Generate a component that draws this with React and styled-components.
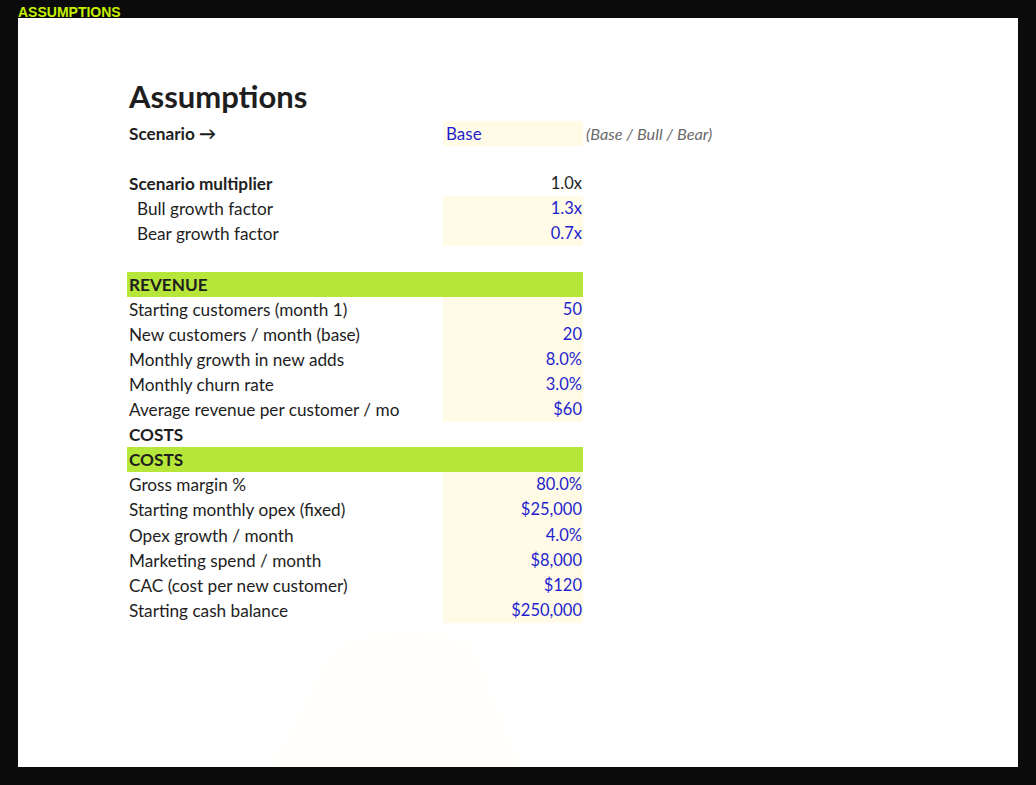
import React from 'react';
import styled, { createGlobalStyle } from 'styled-components';

const GlobalStyle = createGlobalStyle`
  html, body {
    margin: 0;
    padding: 0;
    background-color: #0b0b0b;
  }
`;

const Frame = styled.div`
  width: 1036px;
  height: 785px;
  box-sizing: border-box;
  padding: 0 18px 18px;
  display: flex;
  flex-direction: column;
  background-color: #0b0b0b;
`;

const SheetTab = styled.div`
  height: 18px;
  display: flex;
  align-items: flex-end;
  font-family: 'Liberation Sans', Arial, sans-serif;
  font-weight: 700;
  font-size: 14px;
  line-height: 12px;
  color: #c6f000;
`;

const Page = styled.div`
  position: relative;
  flex: 1;
  background-color: #fff;
  padding: 57px 0 0 109px;
  overflow: hidden;
  font-family: Lato, 'Noto Sans', sans-serif;
  color: #1e1e1e;
`;

const Glow = styled.svg`
  position: absolute;
  left: 0;
  top: 0;
  width: 100%;
  height: 100%;
  pointer-events: none;
`;

const Content = styled.div`
  position: relative;
`;

const Title = styled.h1`
  margin: 0 0 4px 2px;
  font-size: 31px;
  line-height: 42px;
  font-weight: 700;
  color: #1e1e1e;
`;

const Row = styled.div`
  display: grid;
  grid-template-columns: 316px 140px 200px;
  height: 25.1px;
  font-size: 17.2px;
  line-height: 25.1px;
  background-color: ${(p) => (p.$band ? '#b6e63a' : 'transparent')};
  width: ${(p) => (p.$band ? '456px' : 'auto')};
`;

const Label = styled.div`
  padding-left: ${(p) => (p.$indent ? '10px' : '2px')};
  font-weight: ${(p) => (p.$bold ? 700 : 400)};
  white-space: nowrap;
`;

const Value = styled.div`
  text-align: ${(p) => (p.$left ? 'left' : 'right')};
  font-size: ${(p) => (p.$left ? '17px' : '16.5px')};
  padding: 0 1px 0 3px;
  background-color: ${(p) => (p.$input ? '#fffbe7' : 'transparent')};
  color: ${(p) => (p.$input ? '#1f1fcf' : '#1e1e1e')};
  white-space: nowrap;
`;

const Note = styled.div`
  padding-left: 3px;
  font-size: 16.3px;
  font-style: italic;
  color: #6a6a6a;
  white-space: nowrap;
`;

const revenue = [
  ['Starting customers (month 1)', '50'],
  ['New customers / month (base)', '20'],
  ['Monthly growth in new adds', '8.0%'],
  ['Monthly churn rate', '3.0%'],
  ['Average revenue per customer / mo', '$60'],
];

const costs = [
  ['Gross margin %', '80.0%'],
  ['Starting monthly opex (fixed)', '$25,000'],
  ['Opex growth / month', '4.0%'],
  ['Marketing spend / month', '$8,000'],
  ['CAC (cost per new customer)', '$120'],
  ['Starting cash balance', '$250,000'],
];

function InputRow({ label, value, indent }) {
  return (
    <Row>
      <Label $indent={indent}>{label}</Label>
      <Value $input>{value}</Value>
    </Row>
  );
}

export default function App() {
  return (
    <>
      <GlobalStyle />
      <Frame>
        <SheetTab>ASSUMPTIONS</SheetTab>
        <Page>
          <Glow viewBox="0 0 1000 749" preserveAspectRatio="none">
            <path d="M252 749 L318 628 Q388 600 455 628 L502 749 Z" fill="#fffefb" />
          </Glow>
          <Content>
            <Title>Assumptions</Title>
            <Row>
              <Label $bold>Scenario →</Label>
              <Value $input $left>Base</Value>
              <Note>(Base / Bull / Bear)</Note>
            </Row>
            <Row />
            <Row>
              <Label $bold>Scenario multiplier</Label>
              <Value>1.0x</Value>
            </Row>
            <InputRow label="Bull growth factor" value="1.3x" indent />
            <InputRow label="Bear growth factor" value="0.7x" indent />
            <Row />
            <Row $band>
              <Label $bold>REVENUE</Label>
            </Row>
            {revenue.map(([label, value]) => (
              <InputRow key={label} label={label} value={value} />
            ))}
            <Row>
              <Label $bold>COSTS</Label>
            </Row>
            <Row $band>
              <Label $bold>COSTS</Label>
            </Row>
            {costs.map(([label, value]) => (
              <InputRow key={label} label={label} value={value} />
            ))}
          </Content>
        </Page>
      </Frame>
    </>
  );
}
